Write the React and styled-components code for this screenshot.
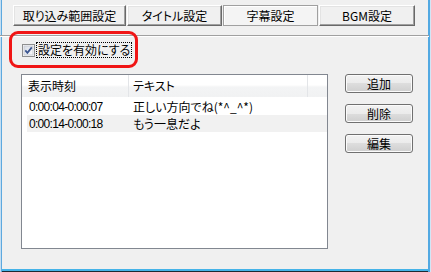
import styled, { createGlobalStyle } from "styled-components";

const GlobalStyle = createGlobalStyle`
  html, body {
    margin: 0;
    padding: 0;
    background: #f0f0f0;
  }
  * {
    box-sizing: border-box;
  }
`;

const tabs = [
  { label: "取り込み範囲設定", width: 113 },
  { label: "タイトル設定", width: 95 },
  { label: "字幕設定", width: 95, active: true },
  { label: "BGM設定", width: 96 },
];

const subtitles = [
  { time: "0:00:04-0:00:07", text: "正しい方向でね(*^_^*)" },
  { time: "0:00:14-0:00:18", text: "もう一息だよ" },
];

export default function App() {
  return (
    <>
      <GlobalStyle />
      <Window>
        <TabBar>
          {tabs.map((t) => (
            <Tab key={t.label} $width={t.width} $active={t.active}>
              {t.label}
            </Tab>
          ))}
        </TabBar>
        <Separator />
        <CheckRow>
          <CheckBox>
            <svg width="13" height="13" viewBox="0 0 13 13">
              <defs>
                <linearGradient id="cbfill" x1="0" y1="0" x2="1" y2="1">
                  <stop offset="0" stopColor="#d6dbe4" />
                  <stop offset="1" stopColor="#fbfbfc" />
                </linearGradient>
              </defs>
              <rect x="0.5" y="0.5" width="12" height="12" fill="#fff" stroke="#8e8f8f" />
              <rect x="2" y="2" width="9" height="9" fill="url(#cbfill)" stroke="#c9ccd3" strokeWidth="1" />
              <path d="M3.3 6.4 L5.4 8.8 L9.8 3.4" fill="none" stroke="#3b5590" strokeWidth="1.8" />
            </svg>
          </CheckBox>
          <CheckLabel>設定を有効にする</CheckLabel>
        </CheckRow>
        <Highlight />
        <ContentRow>
          <ListView>
            <ListHeader>
              <HeaderCell $pad={6}>表示時刻</HeaderCell>
              <HeaderCell $pad={4}>テキスト</HeaderCell>
            </ListHeader>
            {subtitles.map((s, i) => (
              <ListRow key={s.time} $shaded={i % 2 === 1}>
                <TimeCell>{s.time}</TimeCell>
                <TextCell>{s.text}</TextCell>
              </ListRow>
            ))}
          </ListView>
          <ButtonColumn>
            <ActionButton>追加</ActionButton>
            <ActionButton>削除</ActionButton>
            <ActionButton>編集</ActionButton>
          </ButtonColumn>
        </ContentRow>
      </Window>
    </>
  );
}

const Window = styled.div`
  position: relative;
  width: 431px;
  height: 272px;
  padding: 5px 3px 3px 2px;
  display: flex;
  flex-direction: column;
  background: #f0f0f0;
  font-family: "Noto Sans CJK JP", sans-serif;
  font-size: 12px;
  color: #000;
  box-shadow:
    inset 1px 0 0 #c4def2,
    inset 2px 0 0 #5ea9df,
    inset -1px 0 0 #d2e6f6,
    inset -3px 0 0 #52a9e2,
    inset 0 -1px 0 #1f2a33,
    inset 0 -3px 0 #45b3e8;
  overflow: hidden;
`;

const TabBar = styled.div`
  display: flex;
  gap: 1px;
  margin-left: 11px;
  height: 21px;
`;

const Tab = styled.div`
  width: ${(p) => p.$width}px;
  height: 21px;
  display: flex;
  align-items: center;
  justify-content: center;
  line-height: 1;
  font-feature-settings: "palt";
  background: ${(p) => (p.$active ? "#f4f4f4" : "#f0f0f0")};
  border: 1px solid;
  border-color: ${(p) =>
    p.$active ? "#a0a0a0" : "#ffffff #696969 #696969 #ffffff"};
  box-shadow: ${(p) =>
    p.$active
      ? "inset 1px 1px 0 #ffffff"
      : "inset -1px -1px 0 #a0a0a0, inset 1px 1px 0 #e3e3e3"};
`;

const Separator = styled.div`
  margin: 9px -1px 0 -2px;
  height: 2px;
  border-top: 1px solid #a0a0a0;
  border-bottom: 1px solid #ffffff;
`;

const CheckRow = styled.div`
  display: flex;
  align-items: center;
  margin: 5px 0 0 20px;
  height: 16px;
`;

const CheckBox = styled.span`
  width: 13px;
  height: 13px;
  display: block;
  svg {
    display: block;
  }
`;

const CheckLabel = styled.span`
  margin-left: 1px;
  height: 16px;
  padding: 0 1px;
  display: flex;
  align-items: center;
  border: 1px dotted #000;
  font-feature-settings: "palt";
  line-height: 1;
`;

const Highlight = styled.div`
  position: absolute;
  left: 9px;
  top: 31px;
  width: 129px;
  height: 37px;
  border: 3px solid #f01515;
  border-radius: 9px;
  pointer-events: none;
`;

const ContentRow = styled.div`
  display: flex;
  gap: 17px;
  margin: 16px 0 0 19px;
`;

const ListView = styled.div`
  width: 307px;
  height: 175px;
  border: 1px solid #828790;
  background: #ffffff;
`;

const ListHeader = styled.div`
  display: grid;
  grid-template-columns: 107px 179px;
  height: 22px;
  background: linear-gradient(#ffffff 0%, #ffffff 45%, #f3f4f5 55%, #f1f2f3 100%);
`;

const HeaderCell = styled.div`
  display: flex;
  align-items: center;
  padding-left: ${(p) => p.$pad}px;
  border-right: 1px solid #e3e5e8;
  line-height: 1;
  font-feature-settings: "palt";
`;

const ListRow = styled.div`
  display: grid;
  grid-template-columns: 102px 179px;
  margin: ${(p) => (p.$shaded ? "0" : "1px")} 0 0 5px;
  height: 17px;
  background: ${(p) => (p.$shaded ? "#f1f1f1" : "transparent")};
`;

const TimeCell = styled.div`
  display: flex;
  align-items: center;
  padding-left: 2px;
  font-family: "Liberation Sans", "Noto Sans CJK JP", sans-serif;
  letter-spacing: -0.7px;
  line-height: 1;
`;

const TextCell = styled.div`
  display: flex;
  align-items: center;
  padding-left: 4px;
  white-space: nowrap;
  font-feature-settings: "palt";
  line-height: 1;
`;

const ButtonColumn = styled.div`
  display: flex;
  flex-direction: column;
  gap: 11px;
`;

const ActionButton = styled.button`
  width: 68px;
  height: 19px;
  padding: 0;
  border: 1px solid #707070;
  border-radius: 3px;
  background: linear-gradient(#f2f2f2 0%, #ebebeb 50%, #dddddd 50%, #cfcfcf 100%);
  box-shadow: inset 0 0 0 1px #fbfbfb;
  font-family: "Noto Sans CJK JP", sans-serif;
  font-size: 12px;
  line-height: 1;
  color: #000;
`;
